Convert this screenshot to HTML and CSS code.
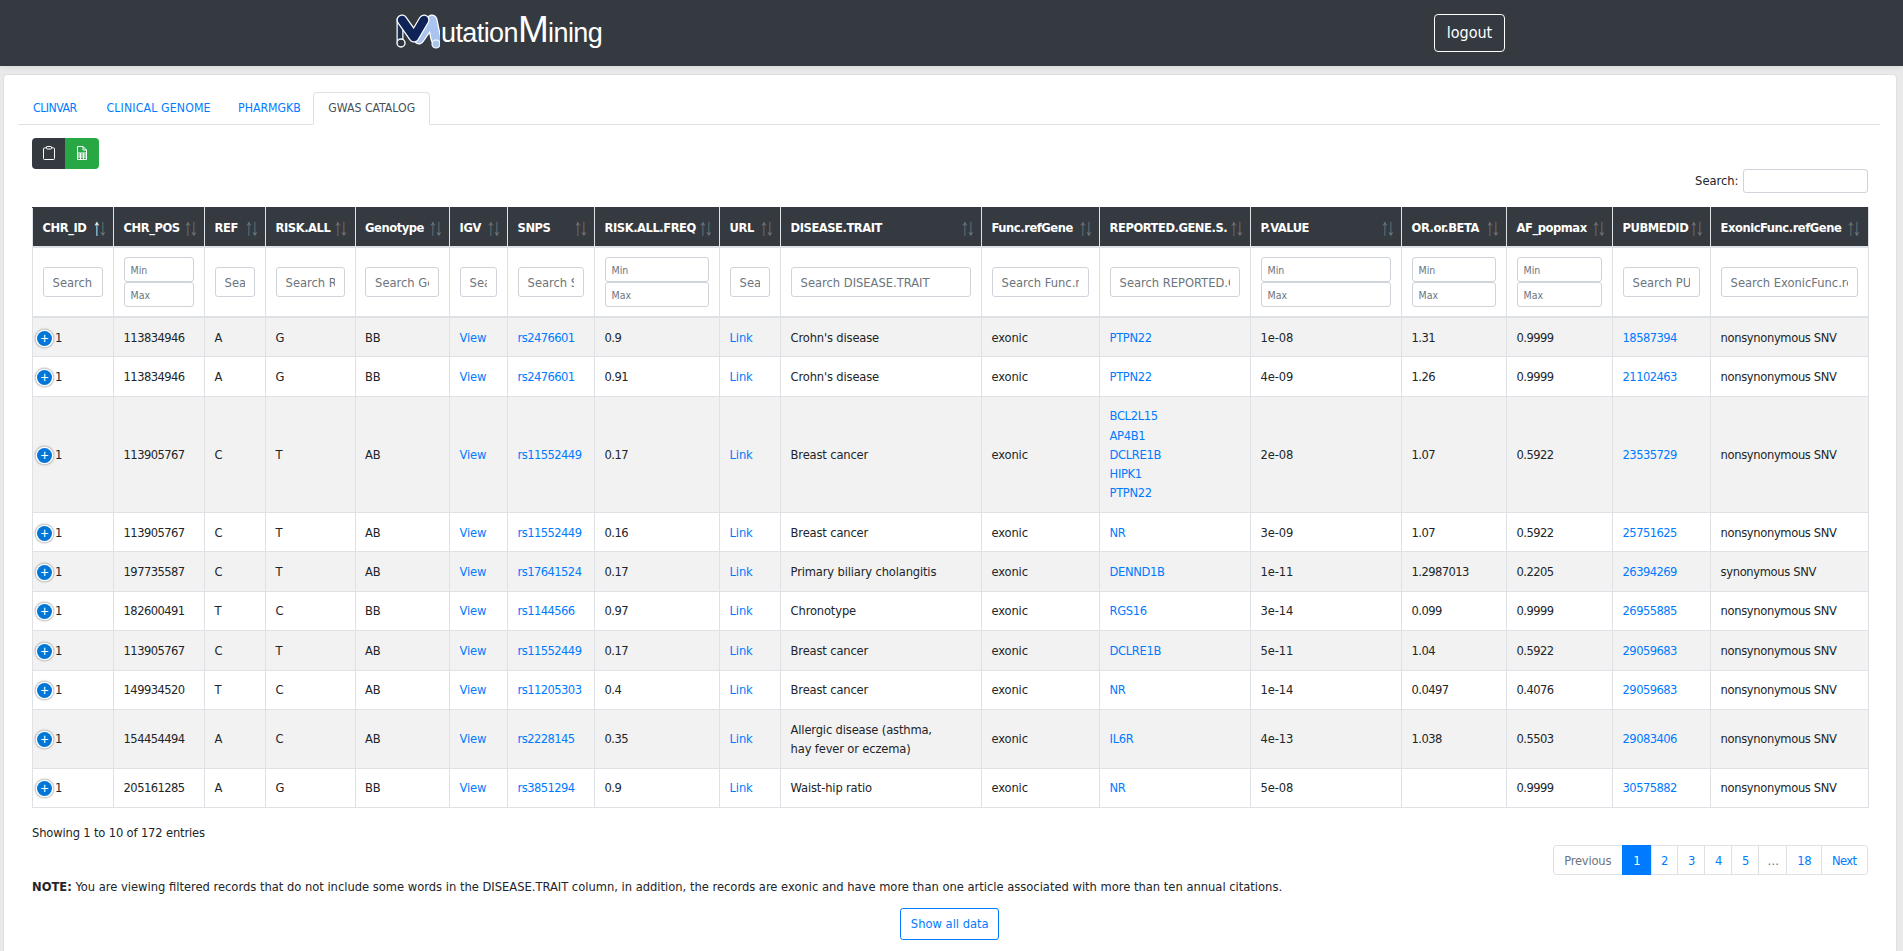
FILE: index.html
```html
<!DOCTYPE html>
<html lang="en">
<head>
<meta charset="utf-8">
<title>MutationMining</title>
<link rel="stylesheet" href="styles.css">
</head>
<body>
<header class="topbar">
  <a class="logo" href="#">
    <svg class="logo-mark" viewBox="0 0 44 36" width="44" height="36" aria-hidden="true">
      <g fill="none" stroke-linecap="round" stroke-linejoin="round">
        <path d="M4 6 L4 26" stroke="#fff" stroke-width="7"/>
        <path d="M4 6 L4 26" stroke="#1d2c50" stroke-width="4.500"/>
        <path d="M23 25 L36 6 L40 25" stroke="#fff" stroke-width="11"/>
        <path d="M23 25 L36 6 L40 25" stroke="#a9c4ee" stroke-width="8.500"/>
        <path d="M6 6 L18 23 L28 6" stroke="#fff" stroke-width="11"/>
        <path d="M6 6 L18 23 L28 6" stroke="#0f2358" stroke-width="8.500"/>
      </g>
      <circle cx="5" cy="29" r="4" fill="#2e3540" stroke="#fff" stroke-width="1.400"/>
      <circle cx="40" cy="30" r="4" fill="#a9c4ee" stroke="#fff" stroke-width="1.200"/>
    </svg>
    <span class="logo-text">utation<span class="logo-big">M</span>ining</span>
  </a>
  <a class="logout" href="#">logout</a>
</header>

<main class="card">
  <ul class="tabs">
    <li class="tab-short"><a href="#">Clinvar</a></li>
    <li class="tab-long"><a href="#">Clinical Genome</a></li>
    <li class="tab-tight"><a href="#">PharmGKB</a></li>
    <li class="active"><a href="#">GWAS Catalog</a></li>
  </ul>
  <section class="pane">
    <div class="btn-group">
      <button class="icon-btn dark" type="button" aria-label="Copy">
        <svg viewBox="0 0 12 14" width="12" height="14" fill="none" stroke="#fff" stroke-width="1"><path d="M3.500 1.800H1.500a1 1 0 0 0-1 1v9.700a1 1 0 0 0 1 1h9a1 1 0 0 0 1-1V2.800a1 1 0 0 0-1-1H8.500"/><rect x="3.500" y="0.500" width="5" height="2.500" rx="0.600"/></svg>
      </button>
      <button class="icon-btn green" type="button" aria-label="Excel">
        <svg viewBox="0 0 10 14" width="10" height="14" fill="none" stroke="#fff" stroke-width="1"><path d="M0.500 13.500V0.500H6L9.500 4V13.500Z"/><path d="M6 0.500V4H9.500"/><path d="M0.500 7H9.500M0.500 9H9.500M0.500 11H9.500M3.500 7V13.500M6.500 7V13.500"/></svg>
      </button>
    </div>
    <div class="global-search"><label>Search:</label><input type="text" class="global-input"></div>
    <table class="data">
      <colgroup>
        <col class="c1"><col class="c2"><col class="c3"><col class="c4"><col class="c5"><col class="c6"><col class="c7"><col class="c8"><col class="c9"><col class="c10"><col class="c11"><col class="c12"><col class="c13"><col class="c14"><col class="c15"><col class="c16"><col class="c17">
      </colgroup>
      <thead>
        <tr class="head">
          <th class="asc">CHR_ID</th><th>CHR_POS</th><th>REF</th><th>RISK.ALL</th><th>Genotype</th><th>IGV</th><th>SNPS</th><th>RISK.ALL.FREQ</th><th>URL</th><th>DISEASE.TRAIT</th><th>Func.refGene</th><th>REPORTED.GENE.S.</th><th>P.VALUE</th><th>OR.or.BETA</th><th>AF_popmax</th><th>PUBMEDID</th><th>ExonicFunc.refGene</th>
        </tr>
        <tr class="filters">
          <td><input class="f" placeholder="Search CHR_ID"></td>
          <td><input class="r" placeholder="Min"><input class="r" placeholder="Max"></td>
          <td><input class="f" placeholder="Search REF"></td>
          <td><input class="f" placeholder="Search RISK.ALL"></td>
          <td><input class="f" placeholder="Search Genotype"></td>
          <td><input class="f" placeholder="Search IGV"></td>
          <td><input class="f" placeholder="Search SNPS"></td>
          <td><input class="r" placeholder="Min"><input class="r" placeholder="Max"></td>
          <td><input class="f" placeholder="Search URL"></td>
          <td><input class="f" placeholder="Search DISEASE.TRAIT"></td>
          <td><input class="f" placeholder="Search Func.refGene"></td>
          <td><input class="f" placeholder="Search REPORTED.GENE.S."></td>
          <td><input class="r" placeholder="Min"><input class="r" placeholder="Max"></td>
          <td><input class="r" placeholder="Min"><input class="r" placeholder="Max"></td>
          <td><input class="r" placeholder="Min"><input class="r" placeholder="Max"></td>
          <td><input class="f" placeholder="Search PUBMEDID"></td>
          <td><input class="f" placeholder="Search ExonicFunc.refGene"></td>
        </tr>
      </thead>
      <tbody>
        <tr><td class="id"><span class="plus">+</span>1</td><td>113834946</td><td>A</td><td>G</td><td>BB</td><td><a href="#">View</a></td><td><a href="#">rs2476601</a></td><td>0.9</td><td><a href="#">Link</a></td><td>Crohn's disease</td><td>exonic</td><td><a href="#">PTPN22</a></td><td>1e-08</td><td>1.31</td><td>0.9999</td><td><a href="#">18587394</a></td><td>nonsynonymous SNV</td></tr>
        <tr><td class="id"><span class="plus">+</span>1</td><td>113834946</td><td>A</td><td>G</td><td>BB</td><td><a href="#">View</a></td><td><a href="#">rs2476601</a></td><td>0.91</td><td><a href="#">Link</a></td><td>Crohn's disease</td><td>exonic</td><td><a href="#">PTPN22</a></td><td>4e-09</td><td>1.26</td><td>0.9999</td><td><a href="#">21102463</a></td><td>nonsynonymous SNV</td></tr>
        <tr><td class="id"><span class="plus">+</span>1</td><td>113905767</td><td>C</td><td>T</td><td>AB</td><td><a href="#">View</a></td><td><a href="#">rs11552449</a></td><td>0.17</td><td><a href="#">Link</a></td><td>Breast cancer</td><td>exonic</td><td><a href="#">BCL2L15</a><br><a href="#">AP4B1</a><br><a href="#">DCLRE1B</a><br><a href="#">HIPK1</a><br><a href="#">PTPN22</a></td><td>2e-08</td><td>1.07</td><td>0.5922</td><td><a href="#">23535729</a></td><td>nonsynonymous SNV</td></tr>
        <tr><td class="id"><span class="plus">+</span>1</td><td>113905767</td><td>C</td><td>T</td><td>AB</td><td><a href="#">View</a></td><td><a href="#">rs11552449</a></td><td>0.16</td><td><a href="#">Link</a></td><td>Breast cancer</td><td>exonic</td><td><a href="#">NR</a></td><td>3e-09</td><td>1.07</td><td>0.5922</td><td><a href="#">25751625</a></td><td>nonsynonymous SNV</td></tr>
        <tr><td class="id"><span class="plus">+</span>1</td><td>197735587</td><td>C</td><td>T</td><td>AB</td><td><a href="#">View</a></td><td><a href="#">rs17641524</a></td><td>0.17</td><td><a href="#">Link</a></td><td>Primary biliary cholangitis</td><td>exonic</td><td><a href="#">DENND1B</a></td><td>1e-11</td><td>1.2987013</td><td>0.2205</td><td><a href="#">26394269</a></td><td>synonymous SNV</td></tr>
        <tr><td class="id"><span class="plus">+</span>1</td><td>182600491</td><td>T</td><td>C</td><td>BB</td><td><a href="#">View</a></td><td><a href="#">rs1144566</a></td><td>0.97</td><td><a href="#">Link</a></td><td>Chronotype</td><td>exonic</td><td><a href="#">RGS16</a></td><td>3e-14</td><td>0.099</td><td>0.9999</td><td><a href="#">26955885</a></td><td>nonsynonymous SNV</td></tr>
        <tr><td class="id"><span class="plus">+</span>1</td><td>113905767</td><td>C</td><td>T</td><td>AB</td><td><a href="#">View</a></td><td><a href="#">rs11552449</a></td><td>0.17</td><td><a href="#">Link</a></td><td>Breast cancer</td><td>exonic</td><td><a href="#">DCLRE1B</a></td><td>5e-11</td><td>1.04</td><td>0.5922</td><td><a href="#">29059683</a></td><td>nonsynonymous SNV</td></tr>
        <tr><td class="id"><span class="plus">+</span>1</td><td>149934520</td><td>T</td><td>C</td><td>AB</td><td><a href="#">View</a></td><td><a href="#">rs11205303</a></td><td>0.4</td><td><a href="#">Link</a></td><td>Breast cancer</td><td>exonic</td><td><a href="#">NR</a></td><td>1e-14</td><td>0.0497</td><td>0.4076</td><td><a href="#">29059683</a></td><td>nonsynonymous SNV</td></tr>
        <tr><td class="id"><span class="plus">+</span>1</td><td>154454494</td><td>A</td><td>C</td><td>AB</td><td><a href="#">View</a></td><td><a href="#">rs2228145</a></td><td>0.35</td><td><a href="#">Link</a></td><td>Allergic disease (asthma,<br>hay fever or eczema)</td><td>exonic</td><td><a href="#">IL6R</a></td><td>4e-13</td><td>1.038</td><td>0.5503</td><td><a href="#">29083406</a></td><td>nonsynonymous SNV</td></tr>
        <tr><td class="id"><span class="plus">+</span>1</td><td>205161285</td><td>A</td><td>G</td><td>BB</td><td><a href="#">View</a></td><td><a href="#">rs3851294</a></td><td>0.9</td><td><a href="#">Link</a></td><td>Waist-hip ratio</td><td>exonic</td><td><a href="#">NR</a></td><td>5e-08</td><td></td><td>0.9999</td><td><a href="#">30575882</a></td><td>nonsynonymous SNV</td></tr>
      </tbody>
    </table>
    <div class="info">Showing 1 to 10 of 172 entries</div>
    <ul class="pager">
      <li class="muted prev"><a href="#">Previous</a></li>
      <li class="current"><a href="#">1</a></li>
      <li class="digit"><a href="#">2</a></li>
      <li class="digit"><a href="#">3</a></li>
      <li class="digit"><a href="#">4</a></li>
      <li class="digit"><a href="#">5</a></li>
      <li class="muted gap"><a href="#">…</a></li>
      <li><a href="#">18</a></li>
      <li><a href="#">Next</a></li>
    </ul>
    <p class="note"><strong>NOTE:</strong> You are viewing filtered records that do not include some words in the DISEASE.TRAIT column, in addition, the records are exonic and have more than one article associated with more than ten annual citations.</p>
    <div class="show-all"><a class="show-btn" href="#">Show all data</a></div>
  </section>
</main>
</body>
</html>
```

FILE: styles.css
```css
* { box-sizing: border-box; }
html, body { height: 100%; }
body {
  margin: 0;
  background: #e9e9e9;
  color: #212529;
  font-family: "DejaVu Sans Condensed", "DejaVu Sans", sans-serif;
  font-stretch: condensed;
  font-size: 12.8px;
  line-height: 19.2px;
  overflow: hidden;
}
a { color: #007bff; text-decoration: none; }

.topbar {
  height: 66px;
  background: #343a40;
  display: flex;
  align-items: flex-start;
  padding: 14px 0 0 396px;
  box-shadow: 0 1px 6px rgba(0, 0, 0, 0.08);
}
.logo { display: flex; align-items: flex-end; width: 1038px; height: 38px; color: #fff; }
.logo-mark { flex: none; margin-bottom: 2px; }
.logo-text {
  font-family: "Liberation Sans", Arial, sans-serif;
  font-stretch: normal;
  font-size: 27px;
  line-height: 38px;
  letter-spacing: -0.6px;
  margin-left: 1px;
}
.logo-big { font-size: 37px; }
.logout {
  display: block;
  width: 71px;
  height: 38px;
  border: 1px solid #fff;
  border-radius: 4px;
  color: #fff;
  font-size: 16px;
  line-height: 36px;
  text-align: center;
}

.card {
  margin: 8px 6px 0 3px;
  padding: 17px 16px 0 14px;
  background: #fff;
  border: 1px solid #dfdfdf;
  border-radius: 4px 4px 0 0;
  height: 900px;
}
.tabs {
  list-style: none;
  margin: 0;
  padding: 0;
  display: flex;
  height: 33px;
  border-bottom: 1px solid #dee2e6;
  text-transform: uppercase;
  font-size: 12.2px;
}
.tabs li a {
  display: block;
  height: 33px;
  padding: 6px 14px;
  border: 1px solid transparent;
  border-radius: 4px 4px 0 0;
}
.tabs li.tab-short { letter-spacing: -0.5px; }
.tabs li.tab-long { letter-spacing: 0.15px; }
.tabs li.tab-tight a { padding: 6px 11.500px; }
.tabs li.active a {
  background: #fff;
  color: #495057;
  border-color: #dee2e6 #dee2e6 #fff;
}

.pane { padding: 13px 12.500px 0 14px; }

.btn-group { display: flex; height: 31px; }
.icon-btn {
  display: flex;
  align-items: center;
  justify-content: center;
  border: 0;
  padding: 0 0 2px;
  height: 31px;
}
.icon-btn.dark { width: 33px; background: #343a40; border-radius: 4px 0 0 4px; }
.icon-btn.green { width: 34px; background: #28a745; border-radius: 0 4px 4px 0; }

.global-search {
  display: flex;
  justify-content: flex-end;
  align-items: center;
  gap: 4px;
  height: 24px;
  margin-bottom: 14px;
}
.global-input {
  width: 125px;
  height: 24px;
  border: 1px solid #ced4da;
  border-radius: 3px;
  outline: none;
}

.data {
  width: 1835.500px;
  table-layout: fixed;
  border-collapse: collapse;
  border: 1px solid #dee2e6;
}
.c1 { width: 81px; }
.c2 { width: 91px; }
.c3 { width: 61px; }
.c4 { width: 89.5px; }
.c5 { width: 94.5px; }
.c6 { width: 58px; }
.c7 { width: 87px; }
.c8 { width: 125px; }
.c9 { width: 61px; }
.c10 { width: 201px; }
.c11 { width: 118px; }
.c12 { width: 151px; }
.c13 { width: 151px; }
.c14 { width: 105px; }
.c15 { width: 106px; }
.c16 { width: 98px; }
.c17 { width: 157.5px; }

.data th, .data td {
  border: 1px solid #dee2e6;
  padding: 9.6px;
  vertical-align: middle;
  text-align: left;
  font-weight: normal;
}
.head th {
  position: relative;
  background: #343a40;
  color: #fff;
  font-weight: bold;
  letter-spacing: -0.45px;
  border-top-color: #343a40;
  border-bottom: 2px solid #dee2e6;
  white-space: nowrap;
  overflow: hidden;
}
.head th::before, .head th::after {
  position: absolute;
  top: 50%;
  margin-top: -12px;
  width: 12px;
  text-align: center;
  font-family: "Liberation Sans", sans-serif;
  font-stretch: normal;
  font-weight: normal;
  letter-spacing: 0;
  font-size: 24px;
  line-height: 24px;
  opacity: 0.3;
  transform: scaleX(0.7);
}
.head th::before { content: "\2191"; right: 10.500px; }
.head th::after { content: "\2193"; right: 4.500px; }
.head th.asc::before { opacity: 1; }

.data .filters td { padding: 8.8px 9.6px; border-bottom: 2px solid #dee2e6; }
.filters input { display: block; width: 100%; background: #fff; outline: none; font: inherit; }
.filters input::placeholder { color: #6c757d; opacity: 1; }
.f {
  height: 30px;
  padding: 0 9px;
  border: 1px solid #ced4da;
  border-radius: 3px;
}
.filters input.r {
  height: 25px;
  padding: 0 6px;
  font-size: 10.5px;
  border: 1px solid #ced4da;
  border-radius: 3px;
}

tbody tr:nth-child(odd) { background: #f2f2f2; }
tbody td { letter-spacing: -0.15px; }
tbody td:nth-child(2),
tbody td:nth-child(7),
tbody td:nth-child(8),
tbody td:nth-child(14),
tbody td:nth-child(15),
tbody td:nth-child(16) { letter-spacing: -0.55px; }
tbody td:nth-child(12),
tbody td:nth-child(17) { letter-spacing: -0.35px; }

.data td.id { padding-left: 3px; white-space: nowrap; }
.plus {
  display: inline-block;
  width: 15px;
  height: 15px;
  margin: -2px 3px -2px 1px;
  border-radius: 50%;
  background: #0275d8;
  color: #fff;
  font: 14px/14px "Liberation Sans", sans-serif;
  text-align: center;
  vertical-align: middle;
  box-shadow: 0 0 0 1.500px #fff, 0 0 2px 2px #9a9a9a;
}

.info { padding-top: 15px; height: 37px; letter-spacing: -0.15px; }
.pager {
  list-style: none;
  display: flex;
  justify-content: flex-end;
  margin: 0;
  padding: 0;
  height: 30px;
  letter-spacing: -0.55px;
}
.pager li a {
  display: block;
  height: 30px;
  padding: 5px 10px;
  margin-left: -1px;
  border: 1px solid #dee2e6;
  background: #fff;
}
.pager li:first-child a { border-radius: 3px 0 0 3px; }
.pager li:last-child a { border-radius: 0 3px 3px 0; }
.pager li.muted a { color: #6c757d; }
.pager li.prev a { letter-spacing: -0.2px; padding: 5px 10.500px; }
.pager li.digit a { padding: 5px 9.600px; }
.pager li.gap a { padding: 5px 8px; }
.pager li.current a { background: #007bff; border-color: #007bff; color: #fff; padding: 5px 10.500px; }

.note { margin: 2px 0 0; }
.show-all { display: flex; justify-content: center; margin-top: 12px; }
.show-btn {
  display: block;
  width: 99px;
  height: 32px;
  border: 1px solid #007bff;
  border-radius: 3px;
  line-height: 30px;
  text-align: center;
}
```
